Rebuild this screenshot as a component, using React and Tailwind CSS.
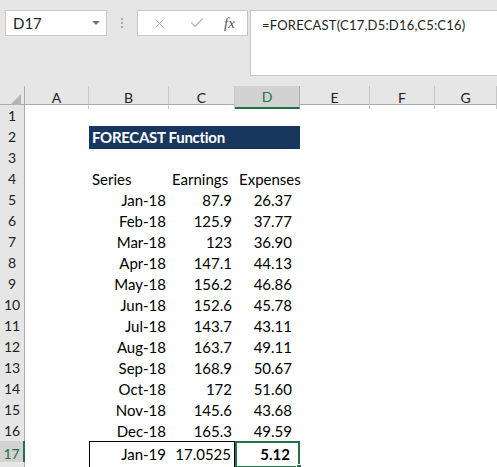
import React from "react";
import { X, Check } from "lucide-react";

const cols = ["A", "B", "C", "D", "E", "F", "G"];
const grid = "grid grid-cols-[25px_64px_80px_66px_65px_70px_65px_62px]";

const data = [
  ["Jan-18", "87.9", "26.37"],
  ["Feb-18", "125.9", "37.77"],
  ["Mar-18", "123", "36.90"],
  ["Apr-18", "147.1", "44.13"],
  ["May-18", "156.2", "46.86"],
  ["Jun-18", "152.6", "45.78"],
  ["Jul-18", "143.7", "43.11"],
  ["Aug-18", "163.7", "49.11"],
  ["Sep-18", "168.9", "50.67"],
  ["Oct-18", "172", "51.60"],
  ["Nov-18", "145.6", "43.68"],
  ["Dec-18", "165.3", "49.59"],
];

function RowHead({ n, active }) {
  return (
    <div
      className={
        active
          ? "flex items-center justify-center bg-[#d2d2d2] border-b border-[#bfbfbf] border-r-2 border-r-[#217346] text-[#217346] text-[14px]"
          : "flex items-center justify-center bg-[#e6e6e6] border-b border-[#c6c6c6] border-r border-r-[#ababab] text-[#222] text-[14px]"
      }
    >
      {n}
    </div>
  );
}

function Empty() {
  return <div />;
}

function Row({ n, label, children }) {
  return (
    <div className={`${grid} h-[21px]`}>
      <RowHead n={label === undefined ? n : label} active={n === 17} />
      {children}
    </div>
  );
}

export default function App() {
  return (
    <div className="w-[497px] h-[467px] overflow-hidden bg-white font-['Lato','Open_Sans',sans-serif] text-[15px] text-black">
      {/* formula bar area */}
      <div className="h-[86px] bg-[#e6e6e6] flex items-start pt-[10px] pl-[5px]">
        <div className="w-[102px] h-[26px] bg-white border border-[#c6c6c6] flex items-center justify-between pl-[7px] pr-[6px]">
          <span className="text-[15px] text-[#222]">D17</span>
          <span className="w-0 h-0 border-l-[4px] border-r-[4px] border-t-[4px] border-l-transparent border-r-transparent border-t-[#777]" />
        </div>
        <div className="w-[30px] h-[26px] flex flex-col items-center justify-center gap-[2px]">
          <span className="w-[2px] h-[2px] bg-[#aaa]" />
          <span className="w-[2px] h-[2px] bg-[#aaa]" />
          <span className="w-[2px] h-[2px] bg-[#aaa]" />
        </div>
        <div className="w-[111px] h-[26px] bg-white border border-[#c6c6c6] flex items-center pl-[14px]">
          <X size={15} strokeWidth={1.5} className="text-[#b0b0b0]" />
          <Check size={16} strokeWidth={2.5} className="text-[#c0c0c0] ml-[22px]" />
          <span className="ml-[19px] font-['Liberation_Serif',serif] italic text-[15px] text-[#555]">fx</span>
        </div>
        <div className="ml-[2px] flex-1 h-[66px] bg-white border border-r-0 border-[#c6c6c6] pl-[11px] pt-[5px] text-[13px] tracking-[0.2px] text-[#222]">
          =FORECAST(C17,D5:D16,C5:C16)
        </div>
      </div>

      {/* column headers */}
      <div className={`${grid} h-[19px] bg-[#e6e6e6] border-b border-[#ababab]`}>
        <div className="flex items-end justify-end pr-[3px] pb-[3px] border-r border-[#ababab]">
          <svg width="12" height="12" viewBox="0 0 12 12">
            <polygon points="12,0 12,12 0,12" fill="#b4b4b4" />
          </svg>
        </div>
        {cols.map((c) =>
          c === "D" ? (
            <div key={c} className="flex items-center justify-center bg-[#d2d2d2] border-r border-[#ababab] border-b-2 border-b-[#217346] text-[#217346] text-[14px]">
              {c}
            </div>
          ) : (
            <div key={c} className="flex items-center justify-center border-r border-[#c6c6c6] text-[#222] text-[14px]">
              {c}
            </div>
          )
        )}
      </div>

      <Row n={1} />
      <Row n={2}>
        <Empty />
        <div className="col-span-3 bg-[#17375e] text-white font-bold flex items-center pl-[3px] tracking-[-0.3px]">FORECAST Function</div>
      </Row>
      <Row n={3} />
      <Row n={4}>
        <Empty />
        <div className="flex items-center pl-[3px]">Series</div>
        <div className="flex items-center pl-[3px]">Earnings</div>
        <div className="flex items-center pl-[4px]">Expenses</div>
      </Row>
      {data.map((r, i) => (
        <Row key={i} n={i + 5}>
          <Empty />
          <div className="flex items-center justify-end pr-[3px]">{r[0]}</div>
          <div className="flex items-center justify-end pr-[3px]">{r[1]}</div>
          <div className="flex items-center justify-end pr-[8px]">{r[2]}</div>
        </Row>
      ))}
      <Row n={17}>
        <Empty />
        <div className="flex items-center justify-end pr-[3px] border border-r-0 border-black">Jan-19</div>
        <div className="flex items-center justify-end pr-[3px] border border-l-0 border-black">17.0525</div>
        <div className="relative flex items-center justify-end pr-[8px] border-2 border-[#217346] font-bold">
          5.12
          <span className="absolute right-[-4px] bottom-[-4px] w-[6px] h-[6px] bg-[#217346] border border-white" />
        </div>
      </Row>
      <Row n={18} label="" />
    </div>
  );
}
